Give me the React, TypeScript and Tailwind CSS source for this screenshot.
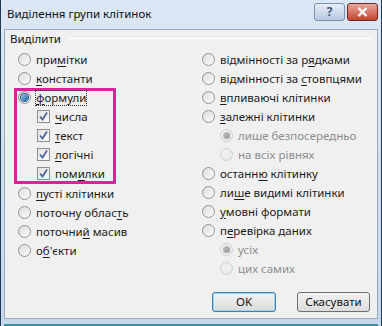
import type { ReactNode } from 'react'

const font = { fontFamily: '"Noto Sans", "Open Sans", sans-serif' }

function Radio({ checked, disabled }: { checked?: boolean; disabled?: boolean }) {
  return (
    <span
      className={
        'relative flex h-[13px] w-[13px] shrink-0 items-center justify-center rounded-full border ' +
        (disabled
          ? 'border-[#cfcfcf] bg-gradient-to-br from-[#f2f2f2] to-[#e8e8e8]'
          : 'border-[#939393] bg-gradient-to-br from-[#dcdcdc] to-[#fbfbfb]')
      }
    >
      {checked && (
        <span
          className={
            'h-[7px] w-[7px] rounded-full ' +
            (disabled
              ? 'bg-gradient-to-br from-[#c4c4c4] to-[#959595]'
              : 'bg-gradient-to-br from-[#8fd0f2] to-[#1a5f96] shadow-[0_0_0_1px_#1d4f7e]')
          }
        />
      )}
    </span>
  )
}

function Check() {
  return (
    <span className="flex h-[13px] w-[13px] shrink-0 items-center justify-center border border-[#8f8f8f] bg-gradient-to-br from-[#e4e4e4] to-[#fafafa]">
      <svg width="11" height="11" viewBox="0 0 11 11">
        <path d="M2 5.5 L4.5 8.5 L9 1.5" fill="none" stroke="#4a5f97" strokeWidth="1.7" />
      </svg>
    </span>
  )
}

function U({ children }: { children: ReactNode }) {
  return <span className="underline underline-offset-2">{children}</span>
}

function Row({
  control,
  children,
  dim,
  focus,
}: {
  control: ReactNode
  children: ReactNode
  dim?: boolean
  focus?: boolean
}) {
  return (
    <div className="flex h-[19px] items-center gap-[5px]">
      {control}
      <span
        className={
          'leading-[14px] ' +
          (dim ? 'text-[#8d8d8d] ' : 'text-[#1a1a1a] ') +
          (focus ? 'outline outline-1 outline-dotted outline-[#333]' : '')
        }
      >
        {children}
      </span>
    </div>
  )
}

export default function App() {
  return (
    <div
      className="flex h-[326px] w-[382px] flex-col border-x border-[#1f3a57] bg-gradient-to-b from-[#dbe7f4] to-[#c6d8ec]"
      style={font}
    >
      <div className="flex h-[29px] items-start justify-between pl-[6px] pr-[3px] pt-[3px]">
        <span className="mt-[2px] text-[11.5px] leading-[18px] text-[#111]">Виділення групи клітинок</span>
        <div className="flex gap-[2px]">
          <div className="flex h-[18px] w-[31px] items-center justify-center rounded-[3px] border border-[#7d92ab] bg-gradient-to-b from-[#e7eef7] to-[#b7c9df] text-[12px] font-bold leading-none text-[#3f5a7a]">
            ?
          </div>
          <div className="flex h-[18px] w-[31px] items-center justify-center rounded-[3px] border border-[#6b2a22] bg-gradient-to-b from-[#e6a79c] to-[#c2422d]">
            <svg width="11" height="10" viewBox="0 0 11 10">
              <path d="M1.5 1 L9.5 9 M9.5 1 L1.5 9" stroke="#fff" strokeWidth="2.4" />
            </svg>
          </div>
        </div>
      </div>

      <div className="mx-[3px] flex h-[290px] flex-col border border-[#9aabbf] bg-[#f0f0f0] text-[11.5px]">
        <div className="flex items-center pl-[5px] pr-[5px] pt-[1px]">
          <span className="leading-[15px] text-[#111]">Виділити</span>
          <span className="ml-[6px] h-px flex-1 border-b border-white bg-[#d5dfe5]" />
        </div>

        <div className="mt-[4px] grid grid-cols-[184px_1fr] pl-[13px]">
          <div className="flex flex-col">
            <Row control={<Radio />}>
              при<U>м</U>ітки
            </Row>
            <Row control={<Radio />}>
              <U>к</U>онстанти
            </Row>
            <div className="-ml-[4px] w-[102px] border-[3px] border-[#e0209a] pl-[1px]">
              <div className="-mt-[3px]">
                <Row control={<Radio checked />} focus>
                  <U>ф</U>ормули
                </Row>
              </div>
              <div className="flex flex-col pl-[19px]">
                <Row control={<Check />}>
                  <U>ч</U>исла
                </Row>
                <Row control={<Check />}>
                  <U>т</U>екст
                </Row>
                <Row control={<Check />}>
                  <U>л</U>огічні
                </Row>
                <div className="-mb-[2px]">
                  <Row control={<Check />}>
                    пом<U>и</U>лки
                  </Row>
                </div>
              </div>
            </div>
            <Row control={<Radio />}>
              <U>п</U>усті клітинки
            </Row>
            <Row control={<Radio />}>
              поточну облас<U>т</U>ь
            </Row>
            <Row control={<Radio />}>
              поточни<U>й</U> масив
            </Row>
            <Row control={<Radio />}>
              о<U>б</U>'єкти
            </Row>
          </div>

          <div className="flex flex-col">
            <Row control={<Radio />}>
              відмінності за р<U>я</U>дками
            </Row>
            <Row control={<Radio />}>
              відмінності за <U>с</U>товпцями
            </Row>
            <Row control={<Radio />}>
              <U>в</U>пливаючі клітинки
            </Row>
            <Row control={<Radio />}>
              <U>з</U>алежні клітинки
            </Row>
            <div className="pl-[18px]">
              <Row control={<Radio checked disabled />} dim>
                лише безпосередньо
              </Row>
              <Row control={<Radio disabled />} dim>
                на всіх рівнях
              </Row>
            </div>
            <Row control={<Radio />}>
              останн<U>ю</U> клітинку
            </Row>
            <Row control={<Radio />}>
              ли<U>ш</U>е видимі клітинки
            </Row>
            <Row control={<Radio />}>
              <U>у</U>мовні формати
            </Row>
            <Row control={<Radio />}>
              п<U>е</U>ревірка даних
            </Row>
            <div className="pl-[18px]">
              <Row control={<Radio checked disabled />} dim>
                усіх
              </Row>
              <Row control={<Radio disabled />} dim>
                цих самих
              </Row>
            </div>
          </div>
        </div>

        <div className="mt-auto mb-[6px] flex justify-end gap-[21px] pr-[7px]">
          <button className="h-[20px] w-[64px] rounded-[3px] border border-[#3c7fb1] bg-gradient-to-b from-[#f2f2f2] to-[#dcdcdc] text-[11.5px] leading-none text-[#111] shadow-[inset_0_0_0_1px_#9fd3f5]">
            OK
          </button>
          <button className="h-[20px] w-[73px] rounded-[3px] border border-[#707070] bg-gradient-to-b from-[#f2f2f2] to-[#dcdcdc] text-[11.5px] leading-none text-[#111]">
            Скасувати
          </button>
        </div>
      </div>
      <div className="mx-[3px] mt-auto h-[4px] border-b-[2px] border-[#3b8f9e]" />
    </div>
  )
}
